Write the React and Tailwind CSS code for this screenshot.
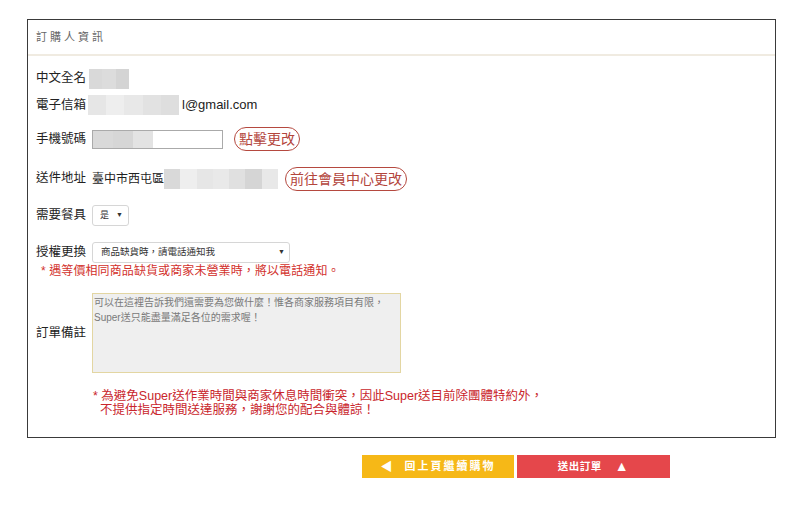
import React from "react";

const FONT = { fontFamily: '"Liberation Sans", "Noto Sans CJK TC", sans-serif' };

function Blur({ shades, w, h }) {
  return (
    <div className="flex" style={{ width: w, height: h }}>
      {shades.map((c, i) => (
        <div key={i} className="flex-1" style={{ background: c }} />
      ))}
    </div>
  );
}

function Pill({ children }) {
  return (
    <span className="inline-flex items-center h-[24px] px-[4px] rounded-full border-[1.5px] border-[#b5493f] text-[#b3453c] text-[14px] leading-none">
      {children}
    </span>
  );
}

export default function App() {
  return (
    <div className="w-[800px] h-[514px] bg-white text-[#222]" style={FONT}>
      <div className="pt-[19px] pl-[27px]">
        <div className="w-[749px] border border-[#3a3a3a] pb-[20px]">
          <div className="h-[36px] flex items-center pl-[8px] border-b-2 border-[#f0ebe1] text-[11px] tracking-[3px] text-[#666]">
            訂購人資訊
          </div>

          <div className="pl-[8px] text-[12.5px]">
            <div className="mt-[12px] h-[21px] flex items-center">
              <span className="w-[53px]">中文全名</span>
              <Blur w={40} h={20} shades={["#d9d9d9", "#dcdcdc", "#d4d4d4"]} />
            </div>

            <div className="mt-[6px] h-[20px] flex items-center">
              <span className="w-[52px]">電子信箱</span>
              <Blur w={91} h={20} shades={["#e6e6e6", "#eeeeee", "#e8e8e8", "#e2e2e2", "#dedede"]} />
              <span className="ml-[3px] text-[13px]">l@gmail.com</span>
            </div>

            <div className="mt-[12px] h-[24px] flex items-center">
              <span className="w-[56px]">手機號碼</span>
              <div className="w-[131px] h-[19px] border border-[#aaaaaa] flex">
                <Blur w={40} h={17} shades={["#d9d9d9", "#d6d6d6"]} />
                <Blur w={20} h={17} shades={["#e3e3e3"]} />
              </div>
              <span className="ml-[11px]">
                <Pill>點擊更改</Pill>
              </span>
            </div>

            <div className="mt-[15px] h-[25px] flex items-center">
              <span className="w-[56px]">送件地址</span>
              <span className="text-[12px]">臺中市西屯區</span>
              <Blur w={114} h={20} shades={["#d9d9d9", "#eeeeee", "#e6e6e6", "#e9e9e9", "#e0e0e0", "#d5d5d5", "#e8e8e8"]} />
              <span className="ml-[7px]">
                <Pill>前往會員中心更改</Pill>
              </span>
            </div>

            <div className="mt-[14px] h-[21px] flex items-center">
              <span className="w-[56px]">需要餐具</span>
              <div className="w-[37px] h-[21px] border border-[#d6d6d6] rounded-[3px] flex items-center pl-[7px] text-[9px] text-[#333]">
                <span>是</span>
                <span className="ml-[7px] text-[7px]">▼</span>
              </div>
            </div>

            <div className="mt-[16px] h-[21px] flex items-center">
              <span className="w-[56px]">授權更換</span>
              <div className="w-[198px] h-[21px] border border-[#d6d6d6] rounded-[3px] flex items-center pl-[8px] pr-[4px] text-[9.5px] text-[#333]">
                <span className="flex-1">商品缺貨時，請電話通知我</span>
                <span className="text-[7px]">▼</span>
              </div>
            </div>
          </div>

          <div className="mt-[1px] h-[14px] leading-[14px] pl-[13px] text-[12px] tracking-[0.1px] text-[#d2302b]">
            * 遇等價相同商品缺貨或商家未營業時，將以電話通知。
          </div>

          <div className="mt-[15px] pl-[8px] flex items-center">
            <span className="w-[56px] text-[12.5px]">訂單備註</span>
            <textarea
              readOnly
              className="w-[309px] h-[80px] resize-none bg-[#efefef] border border-[#e3d6a2] px-[1px] py-[1px] text-[10px] leading-[15px] text-[#777] placeholder:text-[#7a7a7a] outline-none"
              placeholder={"可以在這裡告訴我們還需要為您做什麼！惟各商家服務項目有限，\nSuper送只能盡量滿足各位的需求喔！"}
            />
          </div>

          <div className="mt-[16px] pl-[65px] text-[12.5px] leading-[14px] text-[#c9262c]">
            <div>* 為避免Super送作業時間與商家休息時間衝突，因此Super送目前除團體特約外，</div>
            <div className="pl-[7px]">不提供指定時間送達服務，謝謝您的配合與體諒！</div>
          </div>
        </div>
      </div>

      <div className="mt-[17px] pl-[362px] flex gap-[3px]">
        <div className="w-[152px] h-[23px] bg-[#f6b817] flex items-center justify-center text-white text-[11px] tracking-[2px] font-bold">
          <span className="text-[12px] mr-[12px] tracking-normal">◀</span>
          <span>回上頁繼續購物</span>
        </div>
        <div className="w-[153px] h-[23px] bg-[#e5474b] flex items-center justify-center text-white text-[10.5px] tracking-[0.5px] font-bold">
          <span>送出訂單</span>
          <span className="ml-[13px] text-[14px]">▲</span>
        </div>
      </div>
    </div>
  );
}
